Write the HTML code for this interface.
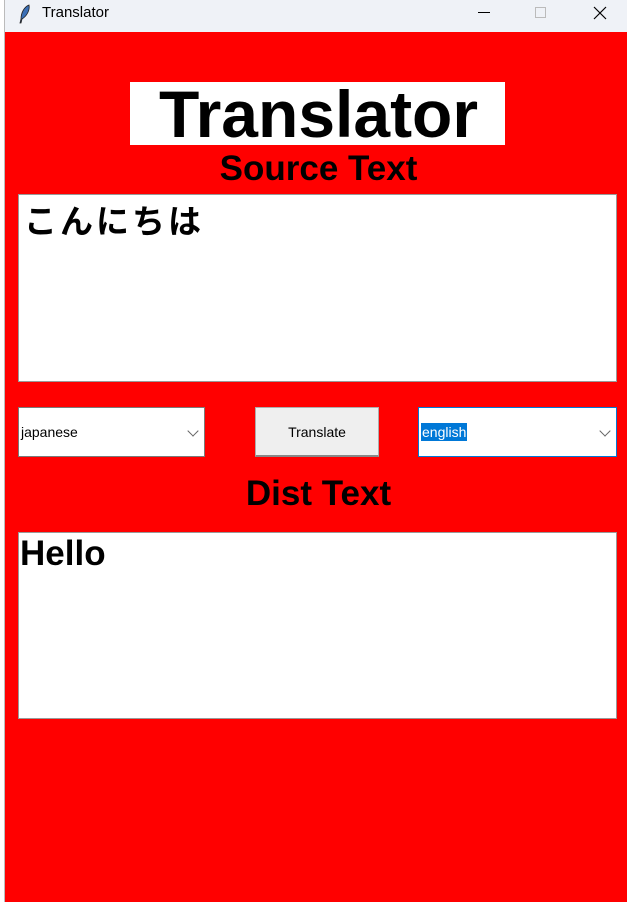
<!DOCTYPE html>
<html><head><meta charset="utf-8"><style>
*{margin:0;padding:0;box-sizing:border-box}
body{width:627px;height:902px;overflow:hidden;background:#fff;position:relative;font-family:"Liberation Sans",sans-serif}
.abs{position:absolute}
#title{left:5px;top:0;width:622px;height:32px;background:#eff2f7}
#main{left:5px;top:32px;width:622px;height:870px;background:#ff0000}
.lbl{position:absolute;left:0;width:627px;text-align:center;font-weight:bold;color:#000}
.box{position:absolute;background:#fff;border:1px solid #999}
.combo{position:absolute;background:#fff;border:1px solid #7a7a7a;font-size:14px;color:#000}
.chev{position:absolute;right:7px;top:19px;width:8px;height:8px;border-right:1px solid #666;border-bottom:1px solid #666;transform:rotate(45deg)}
</style></head><body>
<div class="abs" style="left:4px;top:0;width:1px;height:902px;background:#bbb"></div>
<div class="abs" id="title"></div>
<svg class="abs" style="left:17px;top:4px" width="16" height="20" viewBox="0 0 16 20"><path d="M12 1C7 3 4 9 4 15l-1 4 1 0 1-4C10 12 13 6 12 1z" fill="#3b6fb5" stroke="#222" stroke-width="0.8"/></svg>
<div class="abs" style="left:42px;top:4px;font-size:15px;color:#000;font-family:'Liberation Sans',sans-serif">Translator</div>
<div class="abs" style="left:478px;top:12px;width:12px;height:1px;background:#000"></div>
<div class="abs" style="left:535px;top:7px;width:11px;height:11px;border:1px solid #bbb"></div>
<svg class="abs" style="left:593px;top:6px" width="14" height="14"><path d="M1 1L13 13M13 1L1 13" stroke="#000" stroke-width="1.2"/></svg>
<div class="abs" id="main"></div>
<div class="abs" style="left:130px;top:82px;width:375px;height:63px;background:#fff"></div>
<div class="lbl" style="top:76px;font-size:66px;left:5px">Translator</div>
<div class="lbl" style="top:149px;font-size:35px;left:5px">Source Text</div>
<div class="box" style="left:18px;top:194px;width:599px;height:188px"><div style="position:absolute;left:5px;top:0px;font-size:33px;font-weight:bold;font-family:'Liberation Sans','Noto Sans CJK JP',sans-serif;letter-spacing:3px">こんにちは</div></div>
<div class="combo" style="left:18px;top:407px;width:187px;height:50px"><span style="position:absolute;left:2px;top:16px">japanese</span><div class="chev"></div></div>
<div class="abs" style="left:255px;top:407px;width:124px;height:50px;background:#efefef;border:1px solid #adadad;border-bottom:2px solid #888;font-size:14px;text-align:center;line-height:48px">Translate</div>
<div class="combo" style="left:418px;top:407px;width:199px;height:50px;border:1px solid #0078d7"><span style="position:absolute;left:2px;top:15px;background:#0078d7;color:#fff;padding:0 1px;line-height:18px">english</span><div class="chev"></div></div>
<div class="lbl" style="top:474px;font-size:35px;left:5px">Dist Text</div>
<div class="box" style="left:18px;top:532px;width:599px;height:187px"><div style="position:absolute;left:1px;top:1px;font-size:35px;font-weight:bold">Hello</div></div>
</body></html>
